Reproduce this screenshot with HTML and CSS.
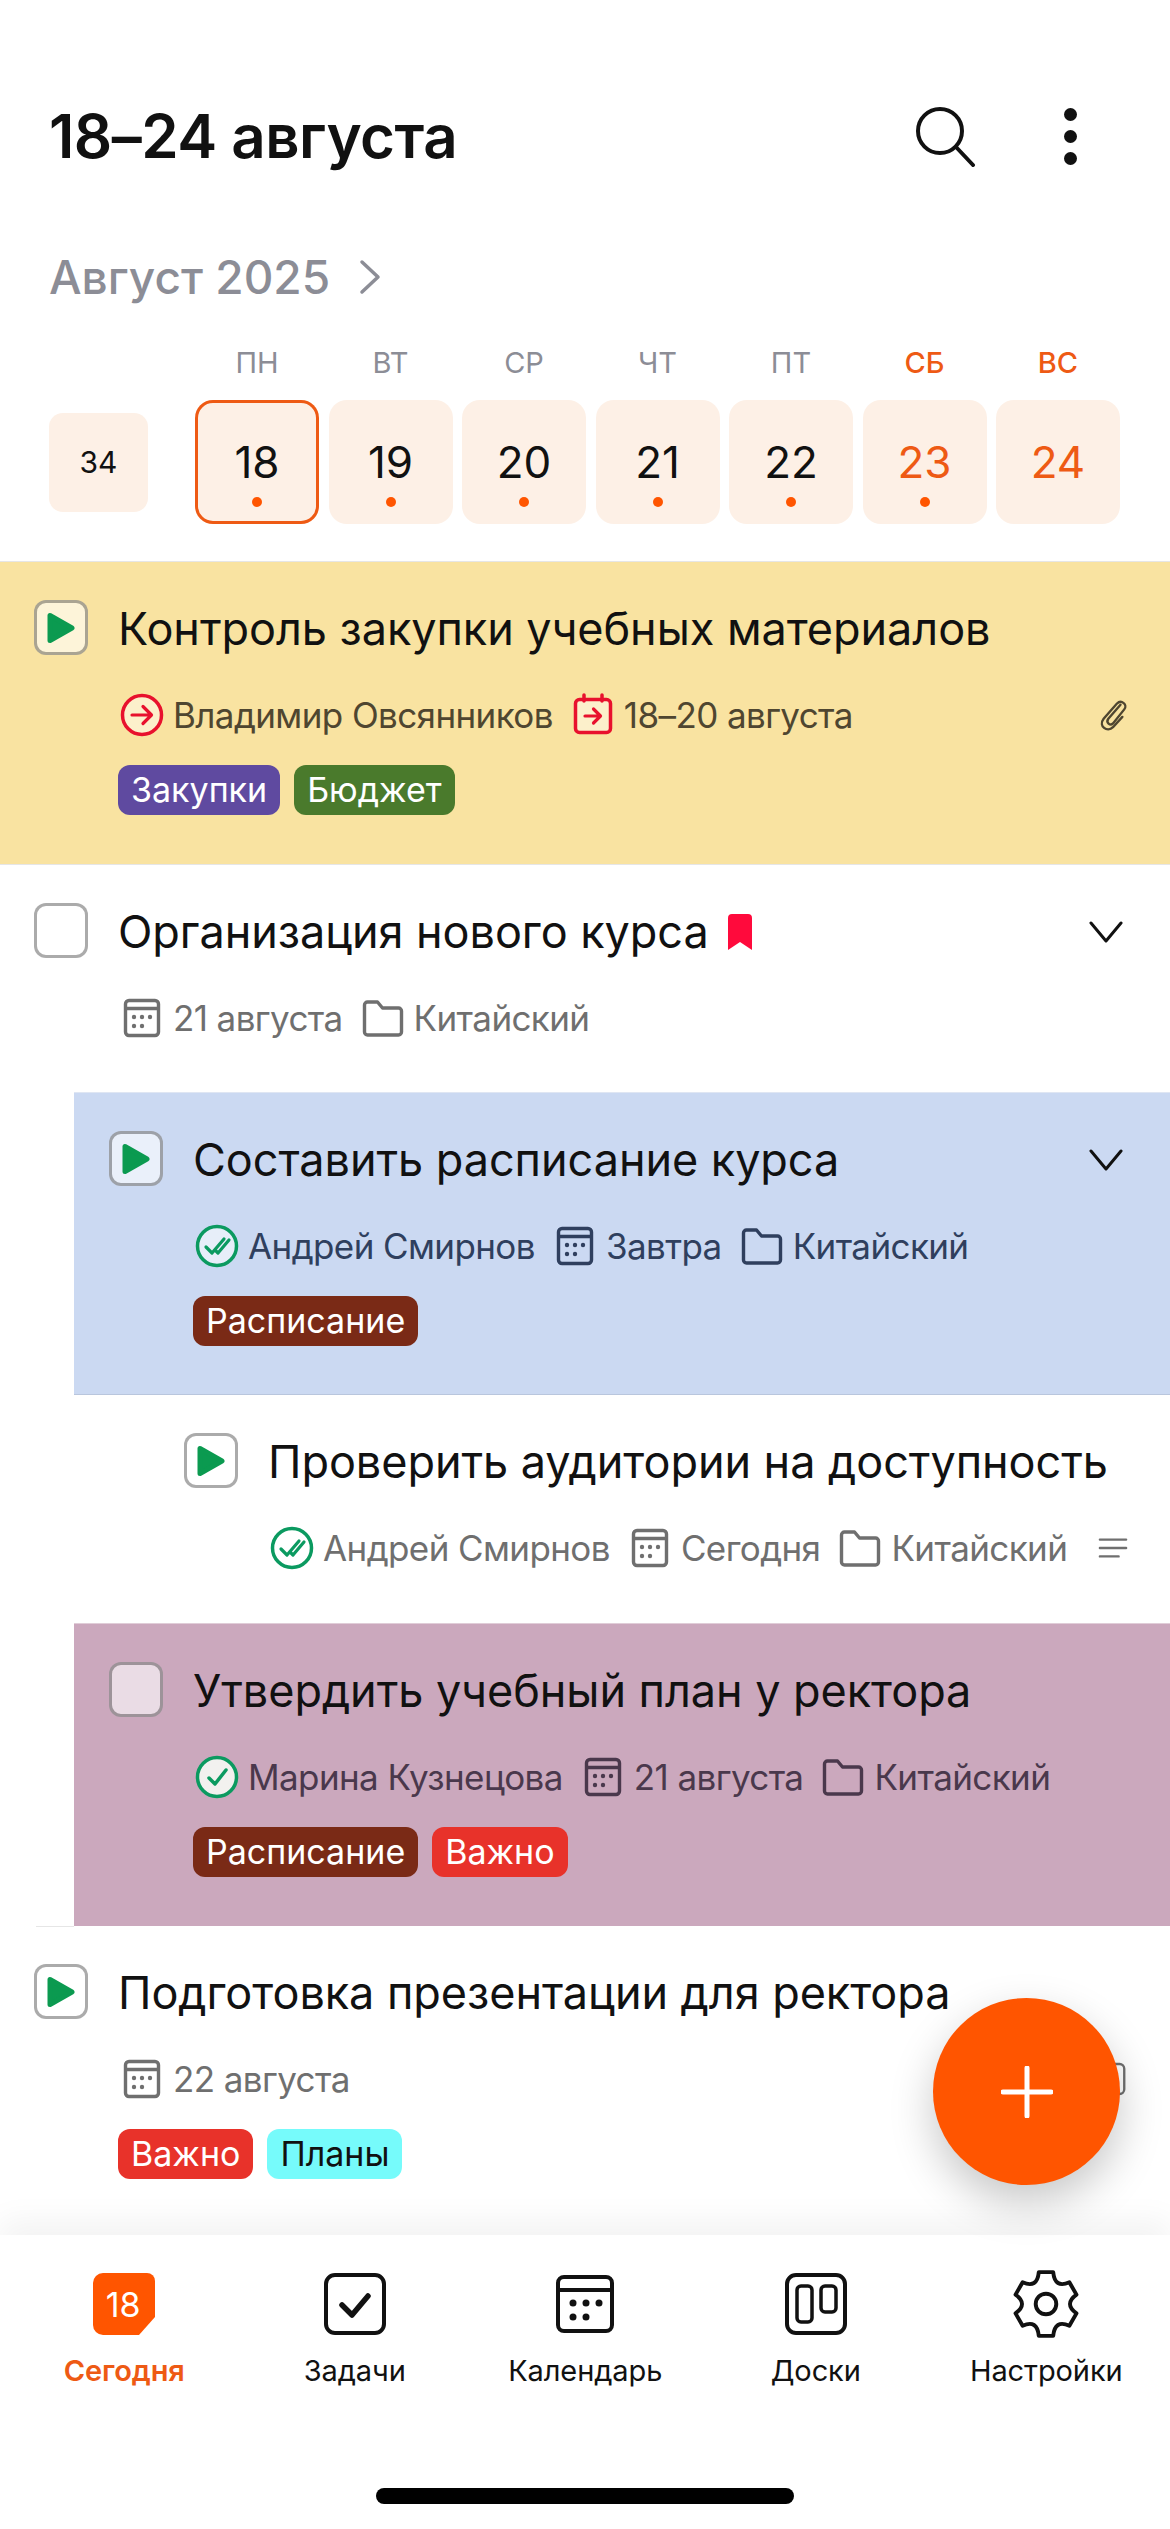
FILE: index.html
```html
<!DOCTYPE html>
<html lang="ru">
<head>
    <meta charset="UTF-8">
    <title>Сегодня</title>
    <link rel="stylesheet" href="styles.css">
</head>
<body>
<svg class="sprite" width="0" height="0">
    <symbol id="i-calendar" viewBox="0 0 48 48">
        <rect x="7.5" y="6.5" width="33" height="35" rx="3.5" fill="none" stroke="currentColor" stroke-width="3.4"/>
        <path d="M7.5 14.5h33" stroke="currentColor" stroke-width="3.4"/>
        <g fill="currentColor"><circle cx="16" cy="23" r="2.2"/><circle cx="24" cy="23" r="2.2"/><circle cx="32" cy="23" r="2.2"/><circle cx="16" cy="32" r="2.2"/><circle cx="24" cy="32" r="2.2"/></g>
    </symbol>
    <symbol id="i-folder" viewBox="0 0 48 48">
        <path d="M5.5 11a3 3 0 0 1 3-3h10l5 6h16a3 3 0 0 1 3 3v21a3 3 0 0 1-3 3h-31a3 3 0 0 1-3-3z" fill="none" stroke="currentColor" stroke-width="3.4" stroke-linejoin="round"/>
    </symbol>
    <symbol id="i-play" viewBox="0 0 28 32">
        <path d="M3 3.5v25l22-12.500z" fill="#0b9a50" stroke="#0b9a50" stroke-width="5" stroke-linejoin="round"/>
    </symbol>
    <symbol id="i-chevron" viewBox="0 0 34 24">
        <path d="M2 3l15 18L32 3" fill="none" stroke="currentColor" stroke-width="3" stroke-linecap="round" stroke-linejoin="round"/>
    </symbol>
    <symbol id="i-double" viewBox="0 0 48 48">
        <circle cx="24" cy="24" r="19.500" fill="rgba(255,255,255,.55)" stroke="#0b9a60" stroke-width="3.500"/>
        <path d="M13 25l6 6 12-14M22 28l3 3 11-13" fill="none" stroke="#0b9a60" stroke-width="3.200" stroke-linecap="round" stroke-linejoin="round"/>
    </symbol>
</svg>

<div class="page">
    <!-- Week header -->
    <header class="top">
        <div class="title-row">
            <h1>18–24 августа</h1>
            <div class="top-actions">
                <svg class="search-icon" viewBox="0 0 62 62"><circle cx="26" cy="26" r="22" fill="none" stroke="#111" stroke-width="4"/><path d="M42 42l17 18" stroke="#111" stroke-width="4" stroke-linecap="round"/></svg>
                <div class="more"><span></span><span></span><span></span></div>
            </div>
        </div>
        <div class="month-row">
            <span>Август 2025</span>
            <svg class="month-chevron" viewBox="0 0 22 36"><path d="M3 3l16 15L3 33" fill="none" stroke="#8c8d96" stroke-width="3.500" stroke-linecap="round" stroke-linejoin="round"/></svg>
        </div>
        <div class="week">
            <div></div>
            <div class="wd">ПН</div>
            <div class="wd">ВТ</div>
            <div class="wd">СР</div>
            <div class="wd">ЧТ</div>
            <div class="wd">ПТ</div>
            <div class="wd off">СБ</div>
            <div class="wd off">ВС</div>
            <div class="week-no">34</div>
            <div class="day today"><b>18</b><i></i></div>
            <div class="day"><b>19</b><i></i></div>
            <div class="day"><b>20</b><i></i></div>
            <div class="day"><b>21</b><i></i></div>
            <div class="day"><b>22</b><i></i></div>
            <div class="day off"><b>23</b><i></i></div>
            <div class="day off"><b>24</b></div>
        </div>
    </header>

    <!-- Task list -->
    <main class="tasks">
        <section class="task yellow">
            <div class="check"><svg><use href="#i-play"/></svg></div>
            <div class="body">
                <div class="name">Контроль закупки учебных материалов</div>
                <div class="meta">
                    <span class="item">
                        <svg class="ic" viewBox="0 0 48 48"><circle cx="24" cy="24" r="19.500" fill="rgba(255,255,255,.45)" stroke="#e8112d" stroke-width="3.500"/><path d="M14 24h19M25 15.500l8.500 8.500-8.500 8.500" fill="none" stroke="#e8112d" stroke-width="3.200" stroke-linecap="round" stroke-linejoin="round"/></svg>
                        Владимир Овсянников</span>
                    <span class="item">
                        <svg class="ic" viewBox="0 0 48 48"><rect x="6.500" y="8.500" width="35" height="33" rx="4" fill="rgba(255,255,255,.45)" stroke="#e8112d" stroke-width="3.500"/><path d="M15 4v6M33 4v6" stroke="#e8112d" stroke-width="3.500" stroke-linecap="round"/><path d="M16 25h15M24.500 18l7 7-7 7" fill="none" stroke="#e8112d" stroke-width="3.200" stroke-linecap="round" stroke-linejoin="round"/></svg>
                        18–20 августа</span>
                    <svg class="end-ic" viewBox="0 0 32 40"><path d="M24 9L11 24c-3 4 2 8 5 5L28 14c4-5-3-11-8-6L6 24c-6 8 4 15 10 9l10-11" fill="none" stroke="currentColor" stroke-width="2.500" stroke-linecap="round"/></svg>
                </div>
                <div class="tags"><span class="tag purple">Закупки</span><span class="tag green">Бюджет</span></div>
            </div>
        </section>

        <section class="task">
            <div class="check"></div>
            <div class="body">
                <div class="name">Организация нового курса
                    <svg class="bookmark" viewBox="0 0 28 38"><path d="M2 5a4 4 0 0 1 4-4h16a4 4 0 0 1 4 4v32l-12-8-12 8z" fill="#ff0a3c"/></svg>
                    <svg class="chevron"><use href="#i-chevron"/></svg>
                </div>
                <div class="meta">
                    <span class="item"><svg class="ic"><use href="#i-calendar"/></svg>21 августа</span>
                    <span class="item"><svg class="ic"><use href="#i-folder"/></svg>Китайский</span>
                </div>
            </div>
        </section>

        <section class="task sub blue">
            <div class="check"><svg><use href="#i-play"/></svg></div>
            <div class="body">
                <div class="name">Составить расписание курса
                    <svg class="chevron"><use href="#i-chevron"/></svg>
                </div>
                <div class="meta">
                    <span class="item"><svg class="ic"><use href="#i-double"/></svg>Андрей Смирнов</span>
                    <span class="item"><svg class="ic"><use href="#i-calendar"/></svg>Завтра</span>
                    <span class="item"><svg class="ic"><use href="#i-folder"/></svg>Китайский</span>
                </div>
                <div class="tags"><span class="tag brown">Расписание</span></div>
            </div>
        </section>

        <section class="task subsub">
            <div class="check"><svg><use href="#i-play"/></svg></div>
            <div class="body">
                <div class="name">Проверить аудитории на доступность</div>
                <div class="meta">
                    <span class="item"><svg class="ic"><use href="#i-double"/></svg>Андрей Смирнов</span>
                    <span class="item"><svg class="ic"><use href="#i-calendar"/></svg>Сегодня</span>
                    <span class="item"><svg class="ic"><use href="#i-folder"/></svg>Китайский</span>
                    <svg class="end-ic lines" viewBox="0 0 32 24"><path d="M2 3h28M2 12h28M2 21h20" stroke="currentColor" stroke-width="2.500" stroke-linecap="round"/></svg>
                </div>
            </div>
        </section>

        <section class="task sub pink">
            <div class="check"></div>
            <div class="body">
                <div class="name">Утвердить учебный план у ректора</div>
                <div class="meta">
                    <span class="item">
                        <svg class="ic" viewBox="0 0 48 48"><circle cx="24" cy="24" r="19.500" fill="#f2f1ef" stroke="#0b9a60" stroke-width="3.500"/><path d="M16 25l6 6 11-14" fill="none" stroke="#0b9a60" stroke-width="3.500" stroke-linecap="round" stroke-linejoin="round"/></svg>
                        Марина Кузнецова</span>
                    <span class="item"><svg class="ic"><use href="#i-calendar"/></svg>21 августа</span>
                    <span class="item"><svg class="ic"><use href="#i-folder"/></svg>Китайский</span>
                </div>
                <div class="tags"><span class="tag brown">Расписание</span><span class="tag red">Важно</span></div>
            </div>
        </section>

        <section class="task last">
            <div class="check"><svg><use href="#i-play"/></svg></div>
            <div class="body">
                <div class="name">Подготовка презентации для ректора</div>
                <div class="meta">
                    <span class="item"><svg class="ic"><use href="#i-calendar"/></svg>22 августа</span>
                    <svg class="end-ic" viewBox="0 0 32 40"><rect x="8" y="4" width="20" height="32" rx="5" fill="none" stroke="currentColor" stroke-width="2.500"/></svg>
                </div>
                <div class="tags"><span class="tag red">Важно</span><span class="tag cyan">Планы</span></div>
            </div>
        </section>
    </main>

    <div class="fab">
        <svg viewBox="0 0 52 52"><path d="M26 2v48M2 26h48" stroke="#fff" stroke-width="5" stroke-linecap="round"/></svg>
    </div>

    <!-- Bottom tabs -->
    <nav class="tabbar">
        <div class="tabs">
            <div class="tab active">
                <svg viewBox="0 0 62 62"><path d="M10 0h44a8 8 0 0 1 8 8v36L46 62H10A10 10 0 0 1 0 52V10A10 10 0 0 1 10 0z" fill="#ff5500"/><text x="30" y="44" text-anchor="middle" class="tab-date">18</text></svg>
                <span>Сегодня</span>
            </div>
            <div class="tab">
                <svg viewBox="0 0 62 62"><rect x="2" y="2" width="58" height="58" rx="9" fill="none" stroke="#111" stroke-width="4"/><path d="M18 32l10 10 16-19" fill="none" stroke="#111" stroke-width="5.500" stroke-linecap="round" stroke-linejoin="round"/></svg>
                <span>Задачи</span>
            </div>
            <div class="tab">
                <svg viewBox="0 0 62 62"><rect x="4" y="4" width="54" height="54" rx="6" fill="none" stroke="#111" stroke-width="4"/><path d="M4 17h54" stroke="#111" stroke-width="4"/><g fill="#111"><circle cx="19" cy="30" r="3.500"/><circle cx="32" cy="30" r="3.500"/><circle cx="45" cy="30" r="3.500"/><circle cx="19" cy="44" r="3.500"/><circle cx="32" cy="44" r="3.500"/></g></svg>
                <span>Календарь</span>
            </div>
            <div class="tab">
                <svg viewBox="0 0 62 62"><g fill="none" stroke="#111"><rect x="2" y="2" width="58" height="58" rx="9" stroke-width="4"/><rect x="12" y="13" width="15" height="36" rx="4" stroke-width="3.500"/><rect x="36" y="13" width="15" height="26" rx="4" stroke-width="3.500"/></g></svg>
                <span>Доски</span>
            </div>
            <div class="tab">
                <svg class="gear" viewBox="-34 -34 68 68"><path d="M-7 -31L7 -31Q8.500 -14.700 22.700 -21.100L29.600 -9.100Q17 0 29.600 9.100L22.700 21.100Q8.500 14.700 7 31L-7 31Q-8.500 14.700 -22.700 21.100L-29.600 9.100Q-17 0 -29.600 -9.100L-22.700 -21.100Q-8.500 -14.700 -7 -31z" fill="none" stroke="#111" stroke-width="3.800" stroke-linejoin="round"/><circle r="10" fill="none" stroke="#111" stroke-width="3.800"/></svg>
                <span>Настройки</span>
            </div>
        </div>
        <div class="home-bar"></div>
    </nav>
</div>
</body>
</html>
```

FILE: styles.css
```css
/* Week view, phone layout */
* {
  box-sizing: border-box;
}
body {
  margin: 0;
  background: #fff;
  font-family: Inter, "Noto Sans", sans-serif;
  color: #111;
}
.sprite {
  position: absolute;
}
.page {
  position: relative;
  display: flex;
  flex-direction: column;
  height: 2529px;
  overflow: hidden;
}

/* Header */
.top {
  padding: 100px 0 37px 49px;
}
.title-row {
  display: flex;
  justify-content: space-between;
  align-items: center;
  height: 72px;
  padding-right: 93px;
}
h1 {
  margin: 0;
  font-size: 60px;
  font-weight: 600;
  letter-spacing: -0.5px;
}
.top-actions {
  display: flex;
  align-items: center;
  gap: 88px;
}
.search-icon {
  width: 62px;
  height: 62px;
}
.more {
  display: flex;
  flex-direction: column;
  gap: 9px;
}
.more span {
  width: 13px;
  height: 13px;
  border-radius: 50%;
  background: #111;
}
.month-row {
  display: flex;
  align-items: center;
  gap: 29px;
  height: 54px;
  margin-top: 78px;
  font-size: 46px;
  font-weight: 500;
  color: #8c8d96;
}
.month-chevron {
  width: 22px;
  height: 36px;
}
.week {
  display: grid;
  grid-template-columns: 136.5px repeat(7, 124px);
  column-gap: 9.5px;
  row-gap: 17px;
  margin-top: 39px;
}
.wd {
  height: 40px;
  line-height: 40px;
  text-align: center;
  font-size: 29px;
  color: #8c8d96;
}
.wd.off {
  color: #ee5a14;
  font-weight: 500;
}
.week-no {
  align-self: center;
  width: 99px;
  height: 99px;
  line-height: 99px;
  text-align: center;
  font-size: 30px;
  background: #fdf0e6;
  border-radius: 14px;
}
.day {
  display: flex;
  flex-direction: column;
  align-items: center;
  height: 124px;
  padding-top: 37px;
  background: #fdf0e6;
  border-radius: 18px;
  font-size: 44px;
}
.day b {
  font-weight: 400;
  line-height: 50px;
}
.day i {
  width: 10px;
  height: 10px;
  margin-top: 10px;
  border-radius: 50%;
  background: #ff5500;
}
.day.off b {
  color: #ee5a14;
}
.day.today {
  box-shadow: inset 0 0 0 3px #ee5a14;
}

/* Tasks */
.tasks {
  flex: 1;
}
.task {
  --meta: #6f6f6f;
  display: flex;
  min-height: 228px;
  padding: 38px 0 45px 34px;
  border-top: 1px solid #e6e6e6;
}
.task.sub {
  margin-left: 74px;
  padding-left: 35px;
}
.task.subsub {
  padding-left: 184px;
  border-top: 0;
}
.task.yellow {
  --meta: #4f4630;
  background: #f9e3a1;
  height: 303px;
  padding-bottom: 0;
}
.task.blue {
  --meta: #2f3f5e;
  background: #cbd9f2;
  border-top-color: #dfe6f3;
  border-bottom: 1px solid #b9c6dd;
  height: 303px;
  padding-bottom: 0;
}
.task.pink {
  --meta: #4a384c;
  background: #cba8bd;
  border-top-color: #e0cdd8;
  height: 303px;
  padding-bottom: 0;
}
.task.last {
  border-top: 0;
  background: linear-gradient(#e6e6e6, #e6e6e6) 36px 0 / 38px 1px no-repeat;
}
.check {
  flex: none;
  display: flex;
  align-items: center;
  justify-content: center;
  width: 54px;
  height: 55px;
  margin-right: 30px;
  background: rgba(255, 255, 255, 0.6);
  border: 3px solid rgba(0, 0, 0, 0.33);
  border-radius: 12px;
}
.check svg {
  width: 28px;
  height: 32px;
}
.body {
  flex: 1;
  min-width: 0;
}
.name {
  display: flex;
  align-items: center;
  gap: 17px;
  height: 62px;
  padding: 0 47px 5px 0;
  font-size: 45px;
  letter-spacing: -0.05px;
  white-space: nowrap;
}
.bookmark {
  flex: none;
  width: 28px;
  height: 38px;
}
.chevron {
  flex: none;
  width: 34px;
  height: 24px;
  margin-left: auto;
}
.meta {
  display: flex;
  align-items: center;
  gap: 16px;
  height: 56px;
  margin-top: 25px;
  padding-right: 42px;
  font-size: 35px;
  letter-spacing: -0.6px;
  color: var(--meta);
  white-space: nowrap;
}
.item {
  display: flex;
  align-items: center;
  gap: 7px;
}
.ic {
  flex: none;
  width: 48px;
  height: 48px;
}
.end-ic {
  flex: none;
  width: 30px;
  height: 38px;
  margin-left: auto;
}
.end-ic.lines {
  height: 24px;
}
.tags {
  display: flex;
  gap: 14px;
  margin-top: 22px;
}
.tag {
  height: 50px;
  padding: 0 13px;
  line-height: 49px;
  font-size: 34px;
  color: #fff;
  border-radius: 12px;
}
.purple { background: #5f4aa0; }
.green { background: #4a7a2c; }
.brown { background: #7a2a16; }
.red { background: #e8322a; }
.cyan { background: #76fbfb; color: #111; }

/* Floating add button */
.fab {
  position: absolute;
  left: 933px;
  top: 1998px;
  z-index: 2;
  display: flex;
  align-items: center;
  justify-content: center;
  width: 187px;
  height: 187px;
  background: #ff5500;
  border-radius: 50%;
  box-shadow: 0 18px 44px rgba(0, 0, 0, 0.22);
}
.fab svg {
  width: 52px;
  height: 52px;
}

/* Tab bar */
.tabbar {
  position: relative;
  z-index: 1;
  display: flex;
  flex-direction: column;
  height: 294px;
  padding-top: 38px;
  background: #fff;
  box-shadow: 0 -14px 30px rgba(0, 0, 0, 0.05);
}
.tabs {
  display: grid;
  grid-template-columns: repeat(5, 230.5px);
  padding-left: 9px;
}
.tab {
  display: flex;
  flex-direction: column;
  align-items: center;
  gap: 18px;
  font-size: 29px;
  letter-spacing: -0.1px;
}
.tab svg {
  width: 62px;
  height: 62px;
}
.tab svg.gear {
  width: 70px;
  height: 70px;
  margin: -4px 0;
}
.tab.active {
  color: #ee5a14;
  font-weight: 600;
}
.tab-date {
  font-family: Inter, sans-serif;
  font-size: 34px;
  font-weight: 400;
  fill: #fff;
}
.home-bar {
  width: 418px;
  height: 16px;
  margin: auto auto 25px;
  background: #000;
  border-radius: 8px;
}
```
